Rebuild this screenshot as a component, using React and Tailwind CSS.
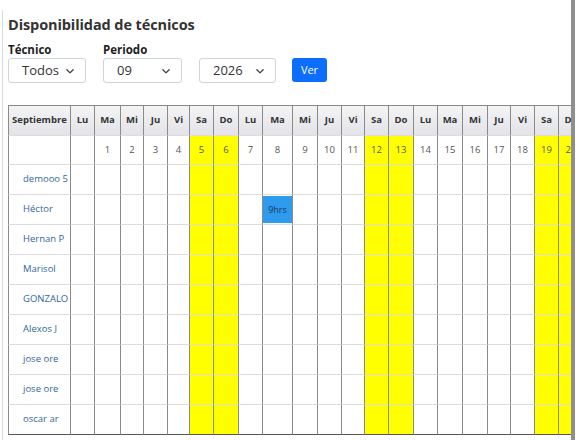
import React from 'react';

const dayNames = ['Lu', 'Ma', 'Mi', 'Ju', 'Vi', 'Sa', 'Do'];
const widths = [24, 26, 23, 24, 22, 24, 25, 24, 30, 25, 24, 23, 24, 25, 24, 25, 25, 23, 24, 24, 25, 24, 25, 24, 25, 24, 25, 24, 25, 24, 25];
const techs = ['demooo 5', 'Héctor', 'Hernan P', 'Marisol', 'GONZALO', 'Alexos J', 'jose ore', 'jose ore', 'oscar ar'];

// first column is the blank Monday, then September 1..30
const days = Array.from({ length: 31 }, (_, i) => ({
  name: dayNames[i % 7],
  num: i === 0 ? '' : String(i),
  weekend: i % 7 === 5 || i % 7 === 6,
}));

function Select({ value, width }) {
  return (
    <div className={`${width} h-[25px] border border-[#ced4da] rounded-[3px] bg-white flex items-center justify-between pl-[13px] pr-[10px] text-[13px] text-[#333]`}>
      <span>{value}</span>
      <svg width="10" height="10" viewBox="0 0 16 16" fill="none" stroke="#444" strokeWidth="2.2" strokeLinecap="round" strokeLinejoin="round">
        <path d="M3 6l5 5 5-5" />
      </svg>
    </div>
  );
}

export default function App() {
  return (
    <div className="w-[581px] h-[440px] bg-white flex overflow-hidden" style={{ fontFamily: '"Open Sans", "Noto Sans", sans-serif' }}>
      <div className="w-[571px] flex-none pl-[2px] pt-[10px]">
        <div className="h-full border-l border-[#dcdcdc] pl-[5px] pt-[5px]">
          <h1 className="text-[14.5px] font-bold text-[#333] leading-[20px] tracking-[-0.1px]">Disponibilidad de técnicos</h1>
          <div className="flex items-end gap-[17px] mt-[8px]">
            <div>
              <div className="text-[11.5px] font-bold text-[#222] leading-[14px] mb-[1px]">Técnico</div>
              <Select value="Todos" width="w-[78px]" />
            </div>
            <div>
              <div className="text-[11.5px] font-bold text-[#222] leading-[14px] mb-[1px]">Periodo</div>
              <Select value="09" width="w-[79px]" />
            </div>
            <Select value="2026" width="w-[77px]" />
            <button className="w-[35px] h-[24px] bg-[#0d6efd] text-white text-[11px] rounded-[3px] ml-[-1px] mb-[1px]">Ver</button>
          </div>
          <div className="mt-[22px] overflow-hidden w-[563px]">
            <table className="border-separate border-spacing-0 table-fixed text-[9.5px]" style={{ width: 63 + widths.reduce((a, b) => a + b, 0) }}>
              <colgroup>
                <col style={{ width: 63 }} />
                {widths.map((w, i) => <col key={i} style={{ width: w }} />)}
              </colgroup>
              <thead>
                <tr className="h-[31px]">
                  <th className="border border-[#8a8a8a] border-b-[#dcdcdc] bg-gradient-to-b from-[#f4f4f6] to-[#e3e3e8] font-bold text-[#333] text-center">Septiembre</th>
                  {days.map((d, i) => (
                    <th key={i} className="border-t border-r border-b border-[#8a8a8a] border-b-[#dcdcdc] bg-gradient-to-b from-[#f4f4f6] to-[#e3e3e8] font-bold text-[#333] text-center">{d.name}</th>
                  ))}
                </tr>
              </thead>
              <tbody>
                <tr className="h-[29px]">
                  <td className="border-l border-r border-b border-l-[#8a8a8a] border-r-[#8a8a8a] border-b-[#dcdcdc]"></td>
                  {days.map((d, i) => (
                    <td key={i} className={`border-r border-b border-r-[#8a8a8a] border-b-[#dcdcdc] text-center text-[#555] ${d.weekend ? 'bg-[#ffff00]' : ''}`}>{d.num}</td>
                  ))}
                </tr>
                {techs.map((t, r) => (
                  <tr key={r} className="h-[30px]">
                    <td className={`border-l border-r border-b border-l-[#8a8a8a] border-r-[#8a8a8a] pl-[14px] text-[#33679c] whitespace-nowrap ${r === techs.length - 1 ? 'border-b-[#555]' : 'border-b-[#dcdcdc]'}`}>{t}</td>
                    {days.map((d, i) => (
                      <td key={i} className={`border-r border-b border-r-[#8a8a8a] p-0 ${r === techs.length - 1 ? 'border-b-[#555]' : 'border-b-[#dcdcdc]'} ${d.weekend ? 'bg-[#ffff00]' : ''}`}>
                        {r === 1 && i === 8 ? (
                          <div className="h-[27px] bg-[#2f9bef] text-[#1e3a5a] text-[9px] flex items-center justify-center">9hrs</div>
                        ) : null}
                      </td>
                    ))}
                  </tr>
                ))}
              </tbody>
            </table>
          </div>
        </div>
      </div>
      <div className="w-[4px] flex-none bg-[#8f8f8f]"></div>
      <div className="flex-1 bg-white"></div>
    </div>
  );
}
